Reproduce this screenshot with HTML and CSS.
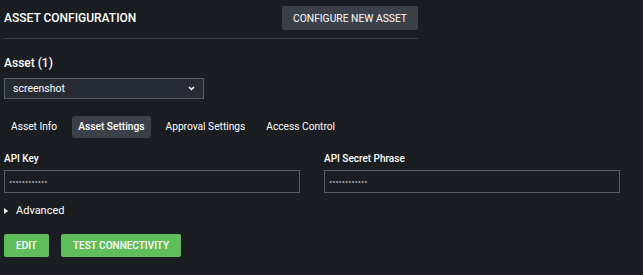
FILE: index.html
```html
<!DOCTYPE html>
<html lang="en">
<head>
    <meta charset="UTF-8">
    <title>Asset Configuration</title>
    <link rel="stylesheet" href="styles.css">
</head>
<body>
    <div class="page">
        <div class="header">
            <h2 class="title">ASSET CONFIGURATION</h2>
            <button class="btn-dark">CONFIGURE NEW ASSET</button>
        </div>
        <h3 class="asset-title">Asset (1)</h3>
        <div class="select-box">
            <span>screenshot</span>
            <svg class="chevron" width="7" height="5" viewBox="0 0 7 5"><path d="M1 1 L3.5 3.5 L6 1" fill="none" stroke="#fff" stroke-width="1.5"/></svg>
        </div>
        <ul class="tabs">
            <li>Asset Info</li>
            <li class="active">Asset Settings</li>
            <li>Approval Settings</li>
            <li>Access Control</li>
        </ul>
        <div class="fields">
            <div class="field">
                <label>API Key</label>
                <div class="input">••••••••••••</div>
            </div>
            <div class="field">
                <label>API Secret Phrase</label>
                <div class="input">••••••••••••</div>
            </div>
        </div>
        <div class="advanced">
            <span class="caret"></span>
            <span>Advanced</span>
        </div>
        <div class="actions">
            <button class="btn-green">EDIT</button>
            <button class="btn-green">TEST CONNECTIVITY</button>
        </div>
    </div>
</body>
</html>
```
FILE: styles.css
```css
* {
    margin: 0;
    padding: 0;
    box-sizing: border-box;
}

body {
    font-family: Roboto, "Liberation Sans", sans-serif;
    background-color: #1a1d21;
    color: #fff;
    height: 100vh;
}

.page {
    padding: 6px 4px 0 4px;
}

.header {
    width: 414px;
    display: flex;
    justify-content: space-between;
    align-items: center;
    padding-bottom: 8px;
    border-bottom: 1px solid #3a3e45;
}

.title {
    font-size: 12px;
    font-weight: 500;
}

.btn-dark {
    width: 136px;
    height: 24px;
    background: #3c4049;
    color: #fff;
    border: none;
    border-radius: 2px;
    font-family: inherit;
    font-size: 10.3px;
}

.asset-title {
    font-size: 12px;
    font-weight: 500;
    margin-top: 17px;
    line-height: 14px;
}

.select-box {
    width: 200px;
    height: 21px;
    margin-top: 8px;
    background: #272b33;
    border: 1px solid #5a5e66;
    display: flex;
    justify-content: space-between;
    align-items: center;
    padding: 0 8px 0 8px;
    font-size: 10.5px;
}

.tabs {
    list-style: none;
    display: flex;
    gap: 8px;
    margin-top: 17px;
    margin-left: 0.5px;
}

.tabs li {
    height: 22px;
    line-height: 22px;
    padding: 0 6.5px;
    font-size: 10.2px;
    border-radius: 3px;
}

.tabs li.active {
    background: #3c4049;
    font-weight: 500;
}

.fields {
    display: flex;
    gap: 24px;
    margin-top: 15px;
}

.field label {
    display: block;
    font-size: 10px;
    font-weight: 500;
    line-height: 12px;
    margin-bottom: 5px;
}

.input {
    width: 296px;
    height: 23px;
    border: 1px solid #5a5e66;
    padding: 0 4px;
    font-size: 9.5px;
    line-height: 21px;
    color: #a0a4ab;
}

.advanced {
    display: flex;
    align-items: center;
    margin-top: 10px;
    font-size: 11px;
    height: 15px;
}

.caret {
    width: 0;
    height: 0;
    border-top: 3.5px solid transparent;
    border-bottom: 3.5px solid transparent;
    border-left: 4px solid #fff;
    margin-right: 8px;
}

.actions {
    display: flex;
    gap: 12px;
    margin-top: 16px;
}

.btn-green {
    height: 23px;
    padding: 0 12px;
    background: #5fbe5b;
    color: #fff;
    border: none;
    border-radius: 2px;
    font-family: inherit;
    font-size: 10px;
    font-weight: 500;
}
```
